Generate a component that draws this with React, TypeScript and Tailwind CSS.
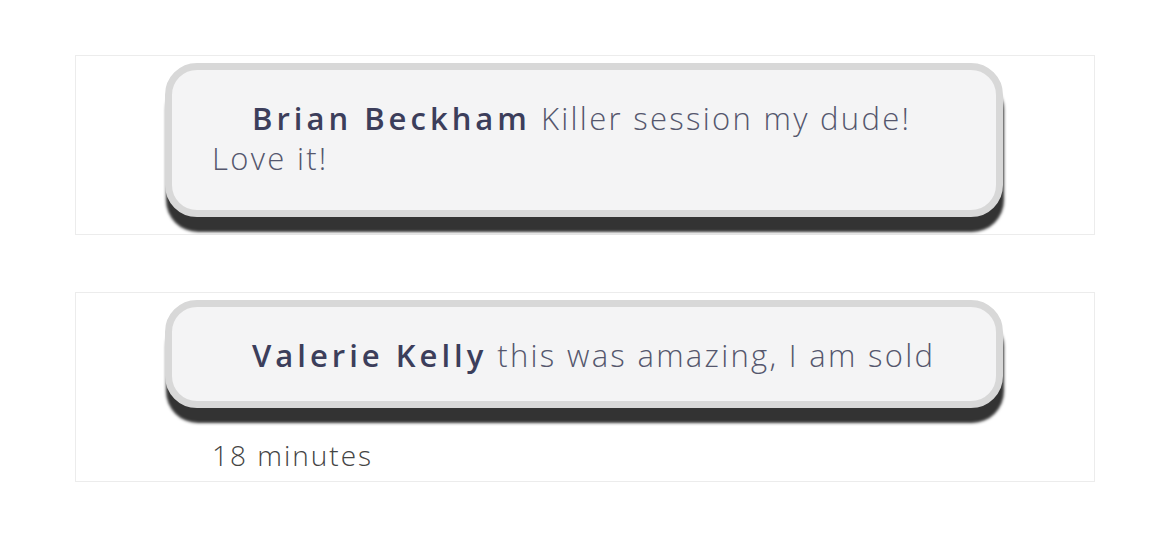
const comments = [
  { name: 'Brian Beckham', text: 'Killer session my dude! Love it!', time: '', tall: true },
  { name: 'Valerie Kelly', text: 'this was amazing, I am sold', time: '18 minutes', tall: false },
];

const Bubble = ({ name, text, tall }: { name: string; text: string; tall: boolean }) => (
  <div
    className={`w-[838px] rounded-[32px] border-[7px] border-[#d8d8d8] bg-[#f4f4f5] px-[40px] pt-[28px] shadow-[1px_15px_3px_#333] ${
      tall ? 'pb-[32px]' : 'pb-[26px]'
    }`}
  >
    <p className="indent-[40px] text-[31px] leading-[40px] text-[#55576d]">
      <span className="mr-[10px] font-semibold tracking-[4px] text-[#3c3e5b]">{name}</span>
      <span className="font-light tracking-[2.3px]">{text}</span>
    </p>
  </div>
);

export default function App() {
  return (
    <div className="min-h-[546px] bg-white pt-[55px] font-['Open_Sans',sans-serif]">
      <div className="ml-[75px] w-[1020px] flex flex-col gap-[57px]">
        {comments.map((c) => (
          <div key={c.name} className="border border-[#ececec] pl-[89px] pt-[7px] pb-[8px] min-h-[180px]">
            <Bubble name={c.name} text={c.text} tall={c.tall} />
            {c.time && (
              <div className="mt-[29px] pl-[47px] text-[28px] leading-[36px] font-light tracking-[2px] text-[#444]">{c.time}</div>
            )}
          </div>
        ))}
      </div>
    </div>
  );
}
